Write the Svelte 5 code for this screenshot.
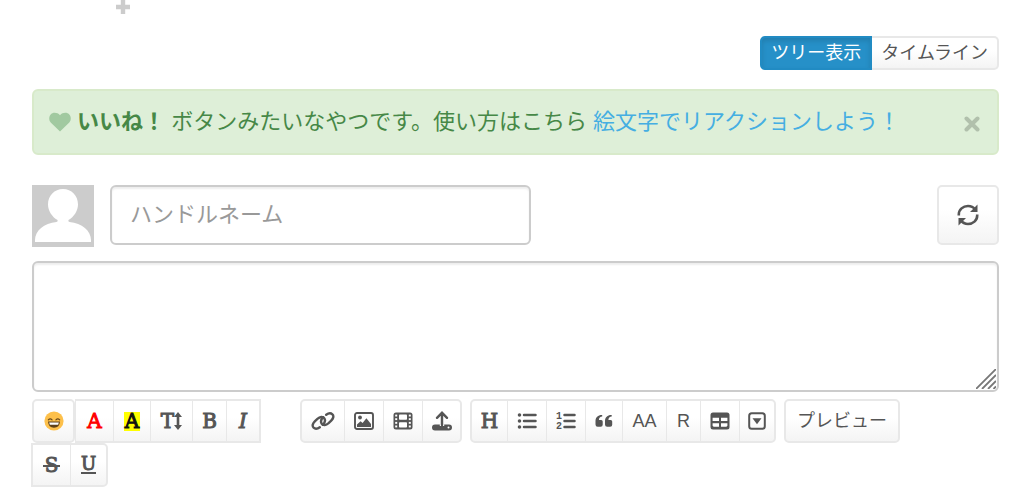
<script>
  // Editor tools, width is the button width in pixels
  const textTools = [
    { id: 'emoji', label: '絵文字', width: 43 },
    { id: 'color', label: '文字色', glyph: 'A', width: 39 },
    { id: 'marker', label: 'マーカー', glyph: 'A', width: 38 },
    { id: 'size', label: '文字サイズ', glyph: 'T', width: 43 },
    { id: 'bold', label: '太字', glyph: 'B', width: 35 },
    { id: 'italic', label: '斜体', glyph: 'I', width: 35 },
    { id: 'strike', label: '取り消し線', glyph: 'S', width: 40 },
    { id: 'underline', label: '下線', glyph: 'U', width: 38 }
  ];

  const insertTools = [
    { id: 'link', label: 'リンク', width: 45 },
    { id: 'image', label: '画像', width: 40 },
    { id: 'film', label: '動画', width: 40 },
    { id: 'upload', label: 'アップロード', width: 40 }
  ];

  const blockTools = [
    { id: 'heading', label: '見出し', glyph: 'H', width: 38 },
    { id: 'ul', label: 'リスト', width: 40 },
    { id: 'ol', label: '番号リスト', width: 40 },
    { id: 'quote', label: '引用', width: 38 },
    { id: 'aa', label: 'アスキーアート', text: 'AA', width: 45 },
    { id: 'ruby', label: 'ルビ', text: 'R', width: 35 },
    { id: 'table', label: '表', width: 40 },
    { id: 'fold', label: '折りたたみ', width: 37 }
  ];

  let view = $state('tree');
  let showNotice = $state(true);
  let handleName = $state('');
  let comment = $state('');
</script>

{#snippet icon(id)}
  {#if id === 'emoji'}
    <svg width="20" height="20" viewBox="0 0 20 20">
      <circle cx="10" cy="10" r="9.6" fill="#fdc04b" />
      <path d="M4.3 8.8q1.9-2 3.8 0M11.9 8.8q1.9-2 3.8 0" fill="none" stroke="#6b4a1b" stroke-width="1.2" stroke-linecap="round" />
      <path d="M4 10.6h12q-.4 6.2-6 6.2t-6-6.2z" fill="#5f4117" />
      <path d="M5.2 11.5h9.6l-.6 2.200H5.8z" fill="#fff" />
    </svg>
  {:else if id === 'size'}
    <svg width="8" height="18" viewBox="0 0 8 18">
      <path d="M4 0l4 5H5.3v8H8l-4 5-4-5h2.7V5H0z" fill="currentColor" />
    </svg>
  {:else if id === 'link'}
    <svg width="24" height="20" viewBox="0 0 24 20" fill="none" stroke="currentColor" stroke-width="2.4" stroke-linecap="round">
      <path d="M8.800 16.200c-2 1.500-4.500 2-6.200.5-1.800-1.700-.8-4.300 1.200-6.300l2.600-2.500c2.600-2.300 5.400-2.600 6.800-.7 1.400 2 .6 4.600-1.400 6.600" />
      <path d="M15.200 3.800c2-1.500 4.500-2 6.200-.5 1.800 1.700.8 4.300-1.200 6.300l-2.600 2.500c-2.600 2.300-5.400 2.600-6.800.7-1.400-2-.6-4.600 1.400-6.600" />
    </svg>
  {:else if id === 'image'}
    <svg width="20" height="18" viewBox="0 0 20 18">
      <rect x="1" y="1" width="18" height="16" rx="2" fill="none" stroke="currentColor" stroke-width="1.9" />
      <circle cx="6" cy="5.500" r="1.900" fill="currentColor" />
      <path d="M3 15v-2.600l3.600-3.200 2 1.800 3.800-4.800L17 12v3z" fill="currentColor" />
    </svg>
  {:else if id === 'film'}
    <svg width="20" height="18" viewBox="0 0 20 18">
      <rect x="0.500" y="0.500" width="19" height="17" rx="2.500" fill="currentColor" />
      <g fill="#fff">
        <rect x="6" y="2.400" width="8" height="5.400" rx=".8" />
        <rect x="6" y="10.200" width="8" height="5.400" rx=".8" />
        <rect x="2.200" y="2.600" width="2" height="1.900" /><rect x="2.200" y="6.200" width="2" height="1.900" />
        <rect x="2.200" y="9.900" width="2" height="1.900" /><rect x="2.200" y="13.500" width="2" height="1.900" />
        <rect x="15.800" y="2.600" width="2" height="1.900" /><rect x="15.800" y="6.200" width="2" height="1.900" />
        <rect x="15.800" y="9.900" width="2" height="1.900" /><rect x="15.800" y="13.500" width="2" height="1.900" />
      </g>
    </svg>
  {:else if id === 'upload'}
    <svg width="20" height="20" viewBox="0 0 20 20">
      <path d="M10 14V2M5 6.800l5-5 5 5" fill="none" stroke="currentColor" stroke-width="2.400" stroke-linecap="round" />
      <path d="M3 13.500h4.800v1.600h4.400v-1.600H17a3 3 0 0 1 0 6H3a3 3 0 0 1 0-6z" fill="currentColor" />
      <circle cx="16.500" cy="16.500" r="1" fill="#fff" />
    </svg>
  {:else if id === 'ul'}
    <svg width="20" height="18" viewBox="0 0 20 18" stroke="currentColor" stroke-linecap="round">
      <path d="M7 3h11.500M7 9h11.500M7 15h11.500" stroke-width="2.500" />
      <path d="M2.500 3h0M2.500 9h0M2.500 15h0" stroke-width="3.600" />
    </svg>
  {:else if id === 'ol'}
    <svg class="ordered" width="20" height="20" viewBox="0 0 20 20">
      <path d="M8.500 4h10M8.500 10h10M8.500 16h10" stroke="currentColor" stroke-width="2.500" stroke-linecap="round" />
      <text x="0" y="8">1</text>
      <text x="0" y="18">2</text>
    </svg>
  {:else if id === 'quote'}
    <svg width="18" height="14" viewBox="0 0 18 14" fill="currentColor">
      <path d="M7.200 1v1.600c-2 .2-3.200 1.400-3.300 3.300h2.300q1.500 0 1.500 1.500v3.400q0 2-2 2H2.700q-2.200 0-2.200-2.200V7.200C.5 3.200 3.200.8 7.200 1z" />
      <path d="M16.700 1v1.600c-2 .2-3.200 1.400-3.300 3.300h2.300q1.500 0 1.500 1.500v3.400q0 2-2 2h-3q-2.200 0-2.200-2.200V7.200c0-4 2.700-6.400 6.700-6.200z" />
    </svg>
  {:else if id === 'table'}
    <svg width="20" height="18" viewBox="0 0 20 18">
      <rect x="0.500" y="0.500" width="19" height="17" rx="2.500" fill="currentColor" />
      <path d="M2.600 5.700H9V9H2.600zM11 5.700h6.400V9H11zM2.600 11.300H9v3.500H3.600l-1-1zM11 11.300h6.400v2.500l-1 1H11z" fill="#fff" />
    </svg>
  {:else if id === 'fold'}
    <svg width="18" height="18" viewBox="0 0 18 18">
      <rect x="1.200" y="1.200" width="15.600" height="15.600" rx="2.500" fill="none" stroke="currentColor" stroke-width="2" />
      <path d="M4.500 6.300h9L9 12.200z" fill="currentColor" />
    </svg>
  {/if}
{/snippet}

{#snippet tool(item)}
  <button type="button" class="btn tool {item.id}" aria-label={item.label} style="width: {item.width}px">
    {#if item.glyph}<span class="glyph">{item.glyph}</span>{/if}
    {#if item.text}<span>{item.text}</span>{/if}
    {@render icon(item.id)}
  </button>
{/snippet}

<main>
  <button type="button" class="plus" aria-label="追加">
    <svg width="16" height="14" viewBox="0 0 16 14">
      <path d="M8 0v14M1 7h14" stroke="#ccc" stroke-width="4.400" />
    </svg>
  </button>

  <div class="views">
    <button type="button" class="btn" class:active={view === 'tree'} onclick={() => (view = 'tree')}>ツリー表示</button>
    <button type="button" class="btn" class:active={view === 'timeline'} onclick={() => (view = 'timeline')}>タイムライン</button>
  </div>

  {#if showNotice}
    <div class="notice">
      <svg class="heart" width="22" height="20" viewBox="0 0 22 20">
        <path d="M11 19.500L1.700 10.400C-.2 8.400-.2 4.700 1.500 2.700 3.800.1 8.300.2 11 3.300 13.700.2 18.200.1 20.500 2.700c1.700 2 1.700 5.700-.2 7.700z" fill="#a1c9a0" />
      </svg>
      <p><strong>いいね！</strong> ボタンみたいなやつです。使い方はこちら <a href="#reaction">絵文字でリアクションしよう！</a></p>
      <button type="button" class="close" aria-label="閉じる" onclick={() => (showNotice = false)}>
        <svg width="16" height="16" viewBox="0 0 16 16">
          <path d="M2.500 2.500l11 11M13.500 2.500l-11 11" stroke="#b1c0ac" stroke-width="4" stroke-linecap="round" />
        </svg>
      </button>
    </div>
  {/if}

  <form onsubmit={(e) => e.preventDefault()}>
    <div class="profile">
      <svg class="avatar" width="62" height="62" viewBox="0 0 62 62">
        <rect width="62" height="62" fill="#ccc" />
        <path d="M31 4c8.500 0 15 6.500 15 15.500 0 6-4 12.500-9.500 15.500q-.8 1.500 1 2C50 38 59 46 59 55v2H3v-2c0-9 9-17 21.500-18q1.800-.5 1-2C20 32 16 25.500 16 19.500 16 10.500 22.500 4 31 4z" fill="#fff" />
      </svg>
      <input type="text" aria-label="ハンドルネーム" placeholder="ハンドルネーム" bind:value={handleName} />
      <button type="button" class="btn refresh" aria-label="更新">
        <svg width="22" height="22" viewBox="0 0 22 22">
          <path d="M1.800 11.500V10.500C1.800 5.500 6 2 11 2c3 0 5.500 1.200 7 3.400M20.200 10.500V11.500c0 5-4.200 8.500-9.200 8.500-3 0-5.500-1.200-7-3.400" fill="none" stroke="currentColor" stroke-width="2.600" />
          <path d="M20.500.5v7.500H13zM1.500 21.500V14H9z" fill="currentColor" />
        </svg>
      </button>
    </div>

    <div class="comment">
      <textarea aria-label="コメント" bind:value={comment}></textarea>
      <svg class="grip" width="20" height="20" viewBox="0 0 20 20">
        <path d="M0 20L20 0M6 20L20 6M12 20l8-8M17.500 20l2.500-2.500" stroke="#777" stroke-width="1.800" />
      </svg>
    </div>

    <div class="toolbar">
      <div class="group text-tools">
        {#each textTools as item}{@render tool(item)}{/each}
      </div>
      <div class="group">
        {#each insertTools as item}{@render tool(item)}{/each}
      </div>
      <div class="group">
        {#each blockTools as item}{@render tool(item)}{/each}
      </div>
      <button type="button" class="btn preview">プレビュー</button>
    </div>
  </form>
</main>

<style>
  :global(body) {
    margin: 0;
    background: #fff;
  }

  main {
    padding: 0 25px 0 32px;
    font-family: "Liberation Sans", "Noto Sans CJK JP", sans-serif;
    color: #555;
  }

  main, main * {
    box-sizing: border-box;
  }

  svg {
    display: block;
    flex: none;
  }

  .plus, .close {
    display: block;
    padding: 0;
    border: 0;
    background: none;
    cursor: pointer;
  }

  .plus {
    margin-left: 83px;
  }

  .btn {
    display: flex;
    align-items: center;
    justify-content: center;
    flex: none;
    padding: 0 9px;
    border: 2px solid #e8e8e8;
    border-radius: 5px;
    background: linear-gradient(#fff 40%, #f4f4f4);
    color: #555;
    font-family: inherit;
    font-size: 18px;
    line-height: 24px;
    white-space: nowrap;
    cursor: pointer;
  }

  .views {
    display: flex;
    justify-content: flex-end;
    margin-top: 22px;
  }

  .views .btn {
    height: 34px;
  }

  .views .btn:first-child {
    border-radius: 5px 0 0 5px;
  }

  .views .btn:last-child {
    border-left: 0;
    border-radius: 0 5px 5px 0;
  }

  .views .btn.active {
    border-color: #218bc3;
    background: #2690c8;
    box-shadow: inset 0 3px 5px rgba(0, 0, 0, 0.12);
    color: #fff;
  }

  .notice {
    display: flex;
    align-items: center;
    height: 66px;
    margin-top: 19px;
    padding: 0 17px 0 15px;
    border: 2px solid #d8eaca;
    border-radius: 6px;
    background: #deefd8;
    color: #468847;
    font-size: 22px;
    line-height: 32px;
  }

  .notice p {
    flex: 1;
    margin: 0 0 0 6px;
  }

  .notice a {
    color: #45aee2;
    text-decoration: none;
  }

  .close {
    margin-top: 4px;
  }

  .profile {
    display: flex;
    align-items: flex-start;
    margin-top: 30px;
  }

  input {
    flex: 0 1 421px;
    min-width: 0;
    height: 60px;
    margin: 0 auto 0 16px;
    padding: 0 18px;
  }

  input, textarea {
    border: 2px solid #ccc;
    border-radius: 6px;
    box-shadow: inset 0 2px 2px rgba(0, 0, 0, 0.07);
    background: #fff;
    color: #555;
    font-family: inherit;
    font-size: 22px;
  }

  input::placeholder {
    color: #999;
    opacity: 1;
  }

  .refresh {
    width: 62px;
    height: 60px;
  }

  .comment {
    position: relative;
    margin-top: 14px;
  }

  textarea {
    display: block;
    width: 100%;
    height: 131px;
    padding: 10px 18px;
    resize: none;
  }

  .grip {
    position: absolute;
    right: 3px;
    bottom: 3px;
    pointer-events: none;
  }

  .toolbar {
    display: flex;
    align-items: flex-start;
    gap: 8px;
    margin-top: 7px;
  }

  .group {
    display: flex;
    flex: none;
  }

  .text-tools {
    flex-wrap: wrap;
    width: 260px;
  }

  .tool {
    height: 44px;
    padding: 0;
    border-width: 2px 1px;
    border-radius: 0;
  }

  .tool + .tool {
    margin-left: -1px;
  }

  .tool:first-child {
    border-left-width: 2px;
    border-radius: 5px 0 0 5px;
  }

  .tool:last-child {
    border-right-width: 2px;
    border-radius: 0 5px 5px 0;
  }

  .tool.emoji {
    border-width: 2px;
    border-radius: 5px;
  }

  .tool.emoji + .tool {
    margin-left: 0;
  }

  .tool.italic {
    border-right-width: 2px;
  }

  .tool.strike {
    border-left-width: 2px;
  }

  .glyph {
    font-family: "DejaVu Serif", serif;
    font-size: 20px;
    line-height: 19px;
    -webkit-text-stroke: 1px currentColor;
  }

  .color .glyph {
    color: #f00;
  }

  .marker .glyph {
    padding: 0 1px;
    background: #ff0;
    color: #111;
  }

  .italic .glyph {
    font-style: italic;
  }

  .strike .glyph {
    position: relative;
    padding: 0 2px;
  }

  .strike .glyph::after {
    content: "";
    position: absolute;
    top: 9px;
    left: 0;
    right: 0;
    height: 2px;
    background: currentColor;
  }

  .underline .glyph {
    border-bottom: 2px solid;
    font-size: 18px;
    line-height: 16px;
  }

  .ordered text {
    fill: currentColor;
    font: bold 10px "Liberation Mono", monospace;
  }

  .preview {
    height: 44px;
    padding: 0 11px;
  }
</style>
